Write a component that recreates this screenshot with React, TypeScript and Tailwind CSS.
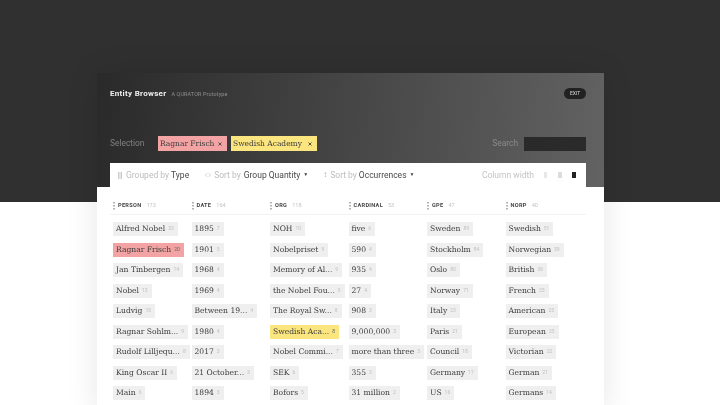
import { ChevronsLeftRight } from "lucide-react";

type Entity = { label: string; count: number; tone?: "red" | "yellow" };
type Column = { name: string; total: number; items: Entity[] };

const COLUMNS: Column[] = [
  {
    name: "PERSON",
    total: 173,
    items: [
      { label: "Alfred Nobel", count: 32 },
      { label: "Ragnar Frisch", count: 20, tone: "red" },
      { label: "Jan Tinbergen", count: 14 },
      { label: "Nobel", count: 13 },
      { label: "Ludvig", count: 10 },
      { label: "Ragnar Sohlm...", count: 9 },
      { label: "Rudolf Lilljequ...", count: 8 },
      { label: "King Oscar II", count: 6 },
      { label: "Main", count: 6 },
    ],
  },
  {
    name: "DATE",
    total: 164,
    items: [
      { label: "1895", count: 7 },
      { label: "1901", count: 5 },
      { label: "1968", count: 4 },
      { label: "1969", count: 4 },
      { label: "Between 19...", count: 4 },
      { label: "1980", count: 4 },
      { label: "2017", count: 3 },
      { label: "21 October...", count: 3 },
      { label: "1894", count: 3 },
    ],
  },
  {
    name: "ORG",
    total: 118,
    items: [
      { label: "NOH", count: 10 },
      { label: "Nobelpriset", count: 9 },
      { label: "Memory of Al...", count: 9 },
      { label: "the Nobel Fou...", count: 9 },
      { label: "The Royal Sw...", count: 8 },
      { label: "Swedish Aca...", count: 8, tone: "yellow" },
      { label: "Nobel Commi...", count: 7 },
      { label: "SEK", count: 6 },
      { label: "Bofors", count: 5 },
    ],
  },
  {
    name: "CARDINAL",
    total: 53,
    items: [
      { label: "five", count: 6 },
      { label: "590", count: 4 },
      { label: "935", count: 4 },
      { label: "27", count: 4 },
      { label: "908", count: 3 },
      { label: "9,000,000", count: 3 },
      { label: "more than three", count: 3 },
      { label: "355", count: 2 },
      { label: "31 million", count: 2 },
    ],
  },
  {
    name: "GPE",
    total: 47,
    items: [
      { label: "Sweden", count: 89 },
      { label: "Stockholm", count: 84 },
      { label: "Oslo", count: 80 },
      { label: "Norway", count: 71 },
      { label: "Italy", count: 23 },
      { label: "Paris", count: 21 },
      { label: "Council", count: 18 },
      { label: "Germany", count: 17 },
      { label: "US", count: 16 },
    ],
  },
  {
    name: "NORP",
    total: 40,
    items: [
      { label: "Swedish", count: 51 },
      { label: "Norwegian", count: 39 },
      { label: "British", count: 36 },
      { label: "French", count: 25 },
      { label: "American", count: 25 },
      { label: "European", count: 25 },
      { label: "Victorian", count: 22 },
      { label: "German", count: 21 },
      { label: "Germans", count: 14 },
    ],
  },
];

function Dots() {
  return (
    <svg width="2" height="8" viewBox="0 0 2 8" className="shrink-0">
      <path d="M1 0v1.5M1 3v1.5M1 6v1.5" stroke="#666" strokeWidth="1" />
    </svg>
  );
}

function Tag({ item }: { item: Entity }) {
  const bg =
    item.tone === "red"
      ? "bg-[#f3a3a3]"
      : item.tone === "yellow"
        ? "bg-[#fbe57f]"
        : "bg-[#efefef]";
  const countColor = item.tone ? "text-[#666]" : "text-[#c0c0c0]";
  return (
    <div className={`flex h-[14px] w-fit items-center gap-[3px] whitespace-nowrap pl-[3px] pr-[4px] ${bg}`}>
      <span className="font-['DejaVu_Serif',serif] text-[7.6px] text-[#3c3c3c]">{item.label}</span>
      <span className={`text-[5px] ${countColor}`}>{item.count}</span>
    </div>
  );
}

function Chip({ label, className }: { label: string; className: string }) {
  return (
    <div className={`flex h-[15px] items-center justify-between whitespace-nowrap pl-[2px] pr-[5px] ${className}`}>
      <span className="font-['DejaVu_Serif',serif] text-[7.5px] text-[#3c3c3c]">{label}</span>
      <svg width="4" height="4" viewBox="0 0 4 4" className="shrink-0">
        <path d="M0.5 0.5l3 3M3.5 0.5l-3 3" stroke="#444" strokeWidth="0.9" />
      </svg>
    </div>
  );
}

export default function App() {
  return (
    <div className="h-[405px] w-[720px] overflow-hidden bg-[linear-gradient(#303030_202px,#ffffff_202px)] pl-[97px] pt-[73px] font-['Roboto',sans-serif] blur-[0.35px]">
      <div className="h-[340px] w-[507px] bg-white shadow-[0_0_30px_rgba(0,0,0,0.1)]">
        {/* Header escuro */}
        <div className="flex h-[114px] flex-col bg-[linear-gradient(95deg,#2a2a2a,#626262)] pl-[13px] pr-[18px]">
          <div className="mt-[14px] flex h-[13px] items-center justify-between">
            <div className="flex items-baseline gap-[5px]">
              <span className="text-[8px] font-bold tracking-[0.3px] text-[#f0f0f0]">Entity Browser</span>
              <span className="text-[5.4px] tracking-[0.15px] text-[#8f8f8f]">A QURATOR Prototype</span>
            </div>
            <div className="flex h-[11px] w-[22px] items-center justify-center rounded-full bg-[#222] text-[5px] text-[#ddd]">
              EXIT
            </div>
          </div>

          <div className="mt-[36px] flex items-center justify-between">
            <div className="flex items-center">
              <span className="w-[48px] text-[8.4px] text-[#808080]">Selection</span>
              <Chip label="Ragnar Frisch" className="w-[69px] bg-[#f3a3a3]" />
              <Chip label="Swedish Academy" className="ml-[4px] w-[86px] bg-[#fbe57f]" />
            </div>
            <div className="flex items-center gap-[6px]">
              <span className="text-[8.4px] text-[#8a8a8a]">Search</span>
              <div className="h-[14px] w-[62px] bg-[#2a2a2a]" />
            </div>
          </div>

          {/* Toolbar */}
          <div className="mt-auto flex h-[24px] items-center bg-white pl-[8px] pr-[10px] text-[8.5px]">
            <svg width="4" height="7" viewBox="0 0 4 7" className="shrink-0">
              <path d="M0 0h1.5v7H0zM2.5 0H4v7H2.5z" fill="#ccc" />
            </svg>
            <span className="ml-[4px] text-[#bdbdbd]">Grouped by</span>
            <span className="ml-[2px] text-[#4a4a4a]">Type</span>
            <ChevronsLeftRight size={8} strokeWidth={1.5} className="ml-[15px] text-[#aaa]" />
            <span className="ml-[2px] text-[#bdbdbd]">Sort by</span>
            <span className="ml-[3px] text-[#4a4a4a]">Group Quantity</span>
            <span className="ml-[3px] text-[5px] text-[#444]">▼</span>
            <span className="ml-[15px] text-[8px] text-[#aaa]">↕</span>
            <span className="ml-[3px] text-[#bdbdbd]">Sort by</span>
            <span className="ml-[2px] text-[#4a4a4a]">Occurrences</span>
            <span className="ml-[3px] text-[5px] text-[#444]">▼</span>
            <span className="ml-auto text-[#c4c4c4]">Column width</span>
            <div className="ml-[10px] h-[6px] w-[3px] bg-[#e8e8e8]" />
            <div className="ml-[11px] h-[6px] w-[4px] bg-[#dcdcdc]" />
            <div className="ml-[10px] h-[6px] w-[4px] bg-[#222]" />
          </div>
        </div>

        {/* Corpo branco */}
        <div className="pl-[16px] pr-[18px] pt-[14px]">
          <div className="grid grid-cols-[repeat(6,78.5px)]">
            {COLUMNS.map((col) => (
              <div key={col.name} className="flex h-[9px] items-center gap-[3px] text-[5.6px]">
                <Dots />
                <span className="font-bold tracking-[0.3px] text-[#444]">{col.name}</span>
                <span className="ml-[2px] text-[#c4c4c4]">{col.total}</span>
              </div>
            ))}
          </div>
          <div className="-ml-[3px] mt-[4px] h-px bg-[#f2f2f2]" />
          <div className="mt-[7px] grid grid-cols-[repeat(6,78.5px)]">
            {COLUMNS.map((col) => (
              <div key={col.name} className="flex flex-col gap-[6.5px]">
                {col.items.map((item) => (
                  <Tag key={item.label} item={item} />
                ))}
              </div>
            ))}
          </div>
        </div>
      </div>
    </div>
  );
}
